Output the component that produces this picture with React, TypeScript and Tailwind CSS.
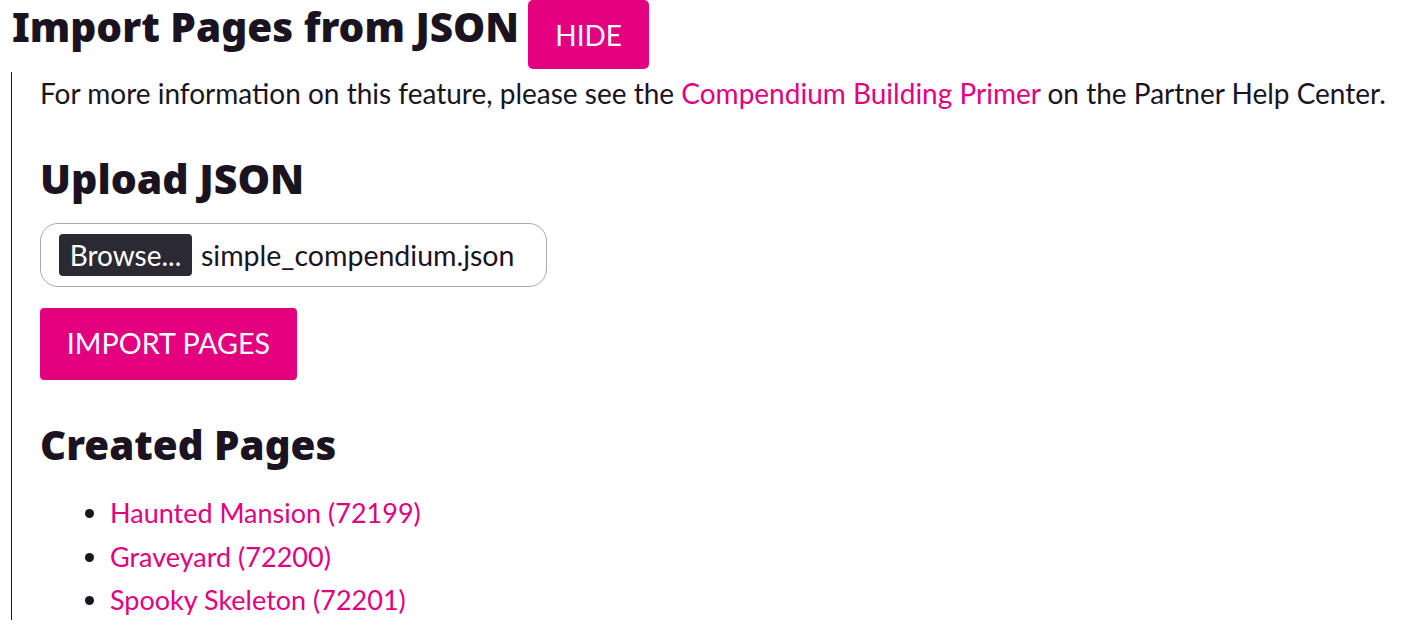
export default function App() {
  const pages = [
    { name: 'Haunted Mansion', id: 72199 },
    { name: 'Graveyard', id: 72200 },
    { name: 'Spooky Skeleton', id: 72201 },
  ]

  return (
    <div className="w-[1402px] h-[630px] overflow-hidden bg-white text-[#1b1420] font-['Lato',sans-serif]">
      <div className="flex items-start h-[72px]">
        <h1 className="ml-[12px] mt-[2px] font-['Noto_Sans',sans-serif] text-[40.5px] leading-[50px] font-black">
          Import Pages from JSON
        </h1>
        <button className="ml-[9px] w-[121px] h-[69px] bg-[#e2007e] text-white text-[28px] rounded-[5px] pt-[1px]">
          HIDE
        </button>
      </div>

      <section className="ml-[11px] border-l border-[#1b1420] h-[548px] pl-[28px]">
        <p className="text-[28px] leading-[40px] pt-[1px]">
          For more information on this feature, please see the{' '}
          <a className="text-[#e2007e]">Compendium Building Primer</a> on the Partner Help Center.
        </p>

        <h2 className="mt-[39px] font-['Noto_Sans',sans-serif] text-[41px] leading-[52px] font-black">
          Upload JSON
        </h2>

        <div className="mt-[19px] w-[507px] h-[64px] border border-[#a8a8ad] rounded-[18px] flex items-center pl-[18px]">
          <span className="h-[42px] w-[133px] bg-[#2b2a33] text-white text-[28px] rounded-[4px] flex items-center justify-center">
            Browse...
          </span>
          <span className="ml-[9px] text-[28.5px]">simple_compendium.json</span>
        </div>

        <button className="mt-[21px] w-[257px] h-[72px] bg-[#e2007e] text-white text-[28.7px] rounded-[4px]">
          IMPORT PAGES
        </button>

        <h2 className="mt-[39px] font-['Noto_Sans',sans-serif] text-[40.3px] leading-[52px] font-black">
          Created Pages
        </h2>

        <ul className="mt-[20px] list-disc pl-[70px] text-[27px] leading-[43.5px]">
          {pages.map((p) => (
            <li key={p.id}>
              <a className="text-[#e2007e]">
                {p.name} ({p.id})
              </a>
            </li>
          ))}
        </ul>
      </section>
    </div>
  )
}
